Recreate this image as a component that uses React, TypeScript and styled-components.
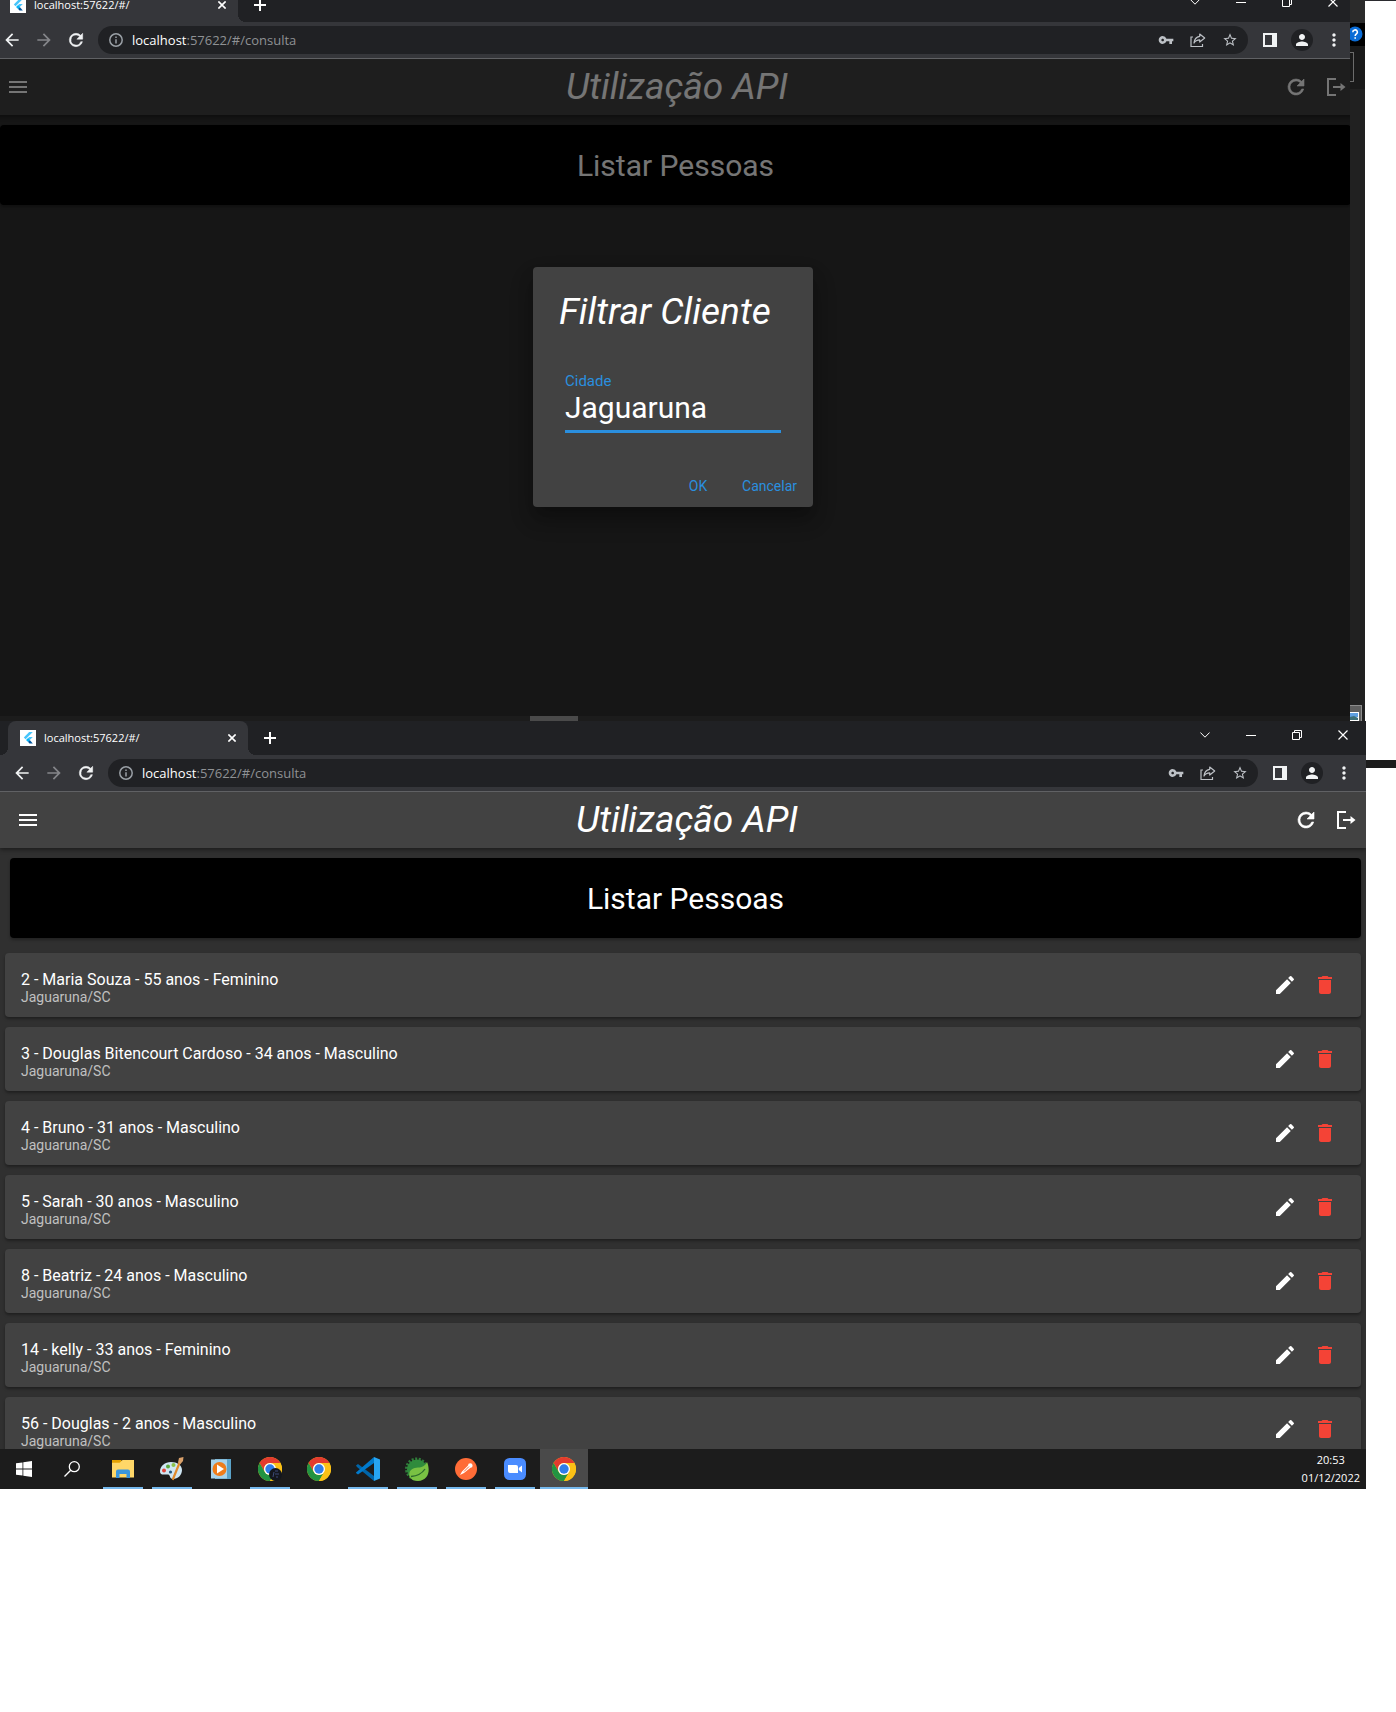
import React from "react";
import styled, { createGlobalStyle, css } from "styled-components";
import {
  MdArrowBack,
  MdArrowForward,
  MdDelete,
  MdEdit,
  MdMenu,
  MdMoreVert,
  MdPerson,
  MdStarBorder,
  MdVpnKey,
} from "react-icons/md";

const uiFont = `"Open Sans", "Noto Sans", sans-serif`;
const appFont = `Roboto, "Liberation Sans", sans-serif`;

const color = {
  strip: "#202124",
  toolbar: "#35363a",
  surface: "#424242",
  body: "#303030",
  blue: "#2a8fdf",
  red: "#f44336",
  taskbar: "#1c1c1c",
};

const GlobalStyle = createGlobalStyle`
  *, *::before, *::after { box-sizing: border-box; }
  body { margin: 0; background: #ffffff; font-family: ${appFont}; }
  button { border: 0; padding: 0; background: none; color: inherit; font: inherit; cursor: pointer; }
  h1, h2, p, ul { margin: 0; padding: 0; }
  ul { list-style: none; }
  svg { display: block; flex: none; }
`;

/* ---------- page rows ---------- */

const Row = styled.section`
  display: flex;
`;

const Clip = styled.div`
  flex: 1;
  min-width: 0;
  height: 721px;
  overflow: hidden;
`;

const Shifted = styled.div`
  margin: -12px -6px 0 -10px;
`;

const Full = styled.div`
  flex: 1;
  min-width: 0;
`;

const Sliver = styled.div`
  width: 15px;
  height: 721px;
  display: flex;
  flex-direction: column;
  overflow: hidden;
  background: #212121;
`;

const SliverTop = styled.div`
  height: 23px;
  background: #2b2b2b;
`;

const SliverHelp = styled.div`
  height: 23px;
  padding-top: 3px;
  background: #000000;
`;

const SliverPanel = styled.div`
  height: 43px;
  padding-top: 6px;
  background: #1a1a1a;
`;

const SliverBox = styled.div`
  width: 4px;
  height: 30px;
  border: 1px solid #6b6b6b;
  border-left: 0;
`;

const SliverThumb = styled.div`
  margin-top: auto;
  width: 12px;
  height: 16px;
  padding-top: 6px;
  background: #5f5f5f;
  border: solid #8c8c8c;
  border-width: 1px 1px 0 0;
`;

const TopMargin = styled.div`
  width: 31px;
  border-top: 1px solid #2b2b2f;
`;

const SideMargin = styled.div`
  width: 30px;
  padding-top: 39px;
`;

const DarkBar = styled.div`
  height: 8px;
  background: #1c1c1c;
`;

/* ---------- browser chrome ---------- */

const TabStrip = styled.header`
  display: flex;
  height: 34px;
  padding-left: 8px;
  background: ${color.strip};
  color: #ffffff;
`;

const Tab = styled.div`
  position: relative;
  display: flex;
  align-items: center;
  gap: 8px;
  width: 240px;
  padding: 0 8px 0 12px;
  border-radius: 8px 8px 0 0;
  background: ${color.toolbar};
  font: 11px/16px ${uiFont};

  &::before,
  &::after {
    content: "";
    position: absolute;
    bottom: 0;
    width: 8px;
    height: 8px;
  }
  &::before {
    right: 100%;
    background: radial-gradient(circle at 0 0, transparent 8px, ${color.toolbar} 8px);
  }
  &::after {
    left: 100%;
    background: radial-gradient(circle at 100% 0, transparent 8px, ${color.toolbar} 8px);
  }
`;

const TabTitle = styled.span`
  flex: 1;
`;

const SmallButton = styled.button`
  display: grid;
  place-items: center;
  width: 16px;
  height: 16px;
`;

const NewTab = styled.button`
  display: grid;
  place-items: center;
  width: 28px;
  height: 34px;
  margin-left: 8px;
`;

const WindowButtons = styled.div`
  display: flex;
  height: 28px;
  margin-left: auto;
`;

const WindowButton = styled.button`
  display: grid;
  place-items: center;
  width: 46px;
`;

const Toolbar = styled.nav`
  display: flex;
  align-items: center;
  gap: 4px;
  height: 37px;
  padding: 0 8px;
  background: ${color.toolbar};
  border-bottom: 1px solid #606164;
`;

const ToolButton = styled.button<{ $tone?: string }>`
  display: grid;
  place-items: center;
  width: 28px;
  height: 28px;
  color: ${(p) => p.$tone ?? "#f1f3f4"};
`;

const Omnibox = styled.div`
  flex: 1;
  display: flex;
  align-items: center;
  gap: 4px;
  height: 28px;
  margin: 0 4px;
  padding: 0 4px 0 11px;
  border-radius: 14px;
  background: ${color.strip};
`;

const Address = styled.span`
  flex: 1;
  margin-left: 5px;
  color: #8f9194;
  font: 13px/20px ${uiFont};

  b {
    color: #ffffff;
    font-weight: 400;
  }
`;

const Avatar = styled.span`
  display: grid;
  place-items: center;
  width: 22px;
  height: 22px;
  border-radius: 50%;
  background: ${color.strip};
`;

/* ---------- application ---------- */

const AppArea = styled.main`
  position: relative;
  height: 657px;
  overflow: hidden;
  background: ${color.body};
  color: #ffffff;
`;

const AppBar = styled.div`
  display: grid;
  grid-template-columns: 1fr auto 1fr;
  align-items: center;
  height: 56px;
  padding: 0 0 0 8px;
  background: ${color.surface};
  box-shadow: 0 2px 4px rgba(0, 0, 0, 0.4);
`;

const AppTitle = styled.h1`
  font: italic 400 37px/42px ${appFont};
`;

const Actions = styled.div`
  display: flex;
  justify-content: flex-end;
`;

const IconButton = styled.button<{ $tone?: string }>`
  display: grid;
  place-items: center;
  width: 40px;
  height: 40px;
  color: ${(p) => p.$tone ?? "#ffffff"};
`;

const ListButton = styled.button`
  display: block;
  width: calc(100% - 15px);
  height: 80px;
  margin: 10px 5px 15px 10px;
  padding-top: 2px;
  border-radius: 4px;
  background: #000000;
  box-shadow: 0 2px 3px rgba(0, 0, 0, 0.3);
  font: 400 30px/36px ${appFont};
`;

const People = styled.ul`
  display: flex;
  flex-direction: column;
  gap: 10px;
  padding: 0 5px;
`;

const Card = styled.li`
  display: flex;
  align-items: center;
  height: 64px;
  padding: 0 16px;
  border-radius: 4px;
  background: ${color.surface};
  box-shadow: 0 2px 3px rgba(0, 0, 0, 0.35);
`;

const CardText = styled.div`
  flex: 1;
  padding-top: 5px;
`;

const PersonName = styled.p`
  font: 400 16px/19px ${appFont};
`;

const PersonCity = styled.p`
  color: #c0c0c0;
  font: 400 14px/16px ${appFont};
`;

const Backdrop = styled.div`
  position: absolute;
  inset: 0;
  display: grid;
  place-items: center;
  padding-bottom: 1px;
  background: rgba(0, 0, 0, 0.54);
`;

const Dialog = styled.form`
  width: 280px;
  border-radius: 4px;
  background: ${color.surface};
  box-shadow: 0 11px 15px rgba(0, 0, 0, 0.2), 0 12px 24px rgba(0, 0, 0, 0.2);
`;

const DialogTitle = styled.h2`
  padding: 24px 26px 0;
  font: italic 400 37px/42px ${appFont};
`;

const Field = styled.div`
  display: flex;
  flex-direction: column;
  padding: 39px 32px 0;

  label {
    color: ${color.blue};
    font: 400 15px/18px ${appFont};
  }
  input {
    width: 100%;
    height: 43px;
    padding: 0 0 6px;
    border: 0;
    border-bottom: 3px solid ${color.blue};
    outline: 0;
    background: none;
    color: #ffffff;
    font: 400 30px/34px ${appFont};
  }
`;

const DialogActions = styled.div`
  display: flex;
  justify-content: flex-end;
  gap: 4px;
  padding: 35px 8px 3px;
`;

const TextButton = styled.button`
  && {
    min-width: 64px;
    height: 36px;
    padding: 0 8px;
    color: ${color.blue};
    font: 400 14px/16px ${appFont};
  }
`;

/* ---------- taskbar ---------- */

const Taskbar = styled.footer`
  display: flex;
  align-items: stretch;
  height: 40px;
  background: ${color.taskbar};
  color: #ffffff;
`;

const SystemButton = styled.button`
  display: grid;
  place-items: center;
  width: 48px;
`;

const Tasks = styled.div`
  display: flex;
  gap: 1px;
  padding-left: 3px;
`;

const Task = styled.button<{ $running?: boolean; $active?: boolean }>`
  display: grid;
  place-items: center;
  width: 48px;
  ${(p) =>
    p.$running &&
    css`
      background: linear-gradient(#76b9ed, #76b9ed) bottom / 40px 2px no-repeat;
    `}
  ${(p) =>
    p.$active &&
    css`
      background: linear-gradient(#76b9ed, #76b9ed) bottom / 48px 2px no-repeat, #4a4a4a;
    `}
`;

const Clock = styled.time`
  margin-left: auto;
  padding: 2px 6px 2px 0;
  text-align: center;
  font: 11px/18px ${uiFont};
`;

const TaskbarEdge = styled.div`
  height: 5px;
  padding-left: 540px;
  background: ${color.taskbar};

  &::before {
    content: "";
    display: block;
    width: 48px;
    height: 5px;
    background: #4a4a4a;
  }
`;

/* ---------- drawings ---------- */

const FlutterIcon = () => (
  <svg width="16" height="16" viewBox="0 0 16 16">
    <path fill="#fff" d="M0 0h16v16H0z" />
    <path fill="#47c5fb" d="M9.2 2h3.6L5.6 9.200 3.800 7.400z" />
    <path fill="#47c5fb" d="M9.200 7h3.600l-3 3-1.800 1.800-1.800-1.800z" />
    <path fill="#00569e" d="m8 11.800 1.800-1.800 3 3.500H9.500z" />
    <path fill="#00b5f8" d="m6.200 10 1.800-1.800L9.800 10 8 11.800z" />
  </svg>
);

const ReloadIcon = ({ size }: { size: number }) => (
  <svg width={size} height={size} viewBox="0 0 24 24" fill="currentColor" stroke="currentColor" strokeWidth="0.6">
    <path d="M17.650 6.350A7.960 7.960 0 0 0 12 4a8 8 0 1 0 7.730 10h-2.080A6 6 0 1 1 12 6c1.660 0 3.140.69 4.220 1.780L13 11h7V4z" />
  </svg>
);

const Cross = ({ size }: { size: number }) => (
  <svg width={size} height={size} viewBox="0 0 10 10" stroke="currentColor" strokeWidth={size > 9 ? 1.2 : 2}>
    <path d="M.5.5l9 9M9.500.5l-9 9" />
  </svg>
);

const PlusIcon = () => (
  <svg width="12" height="12" viewBox="0 0 12 12" stroke="currentColor" strokeWidth="2">
    <path d="M6 0v12M0 6h12" />
  </svg>
);

const ChevronIcon = () => (
  <svg width="10" height="6" viewBox="0 0 10 6" fill="none" stroke="currentColor">
    <path d="M.4.5 5 5.200 9.600.5" />
  </svg>
);

const MinimizeIcon = () => (
  <svg width="10" height="1" viewBox="0 0 10 1">
    <path fill="currentColor" d="M0 0h10v1H0z" />
  </svg>
);

const RestoreIcon = () => (
  <svg width="10" height="10" viewBox="0 0 10 10" fill="none" stroke="currentColor">
    <path d="M.5 2.500h7v7h-7zM2.500 2.500v-2h7v7h-2" />
  </svg>
);

const InfoIcon = () => (
  <svg width="14" height="14" viewBox="0 0 14 14" fill="none" stroke="#9aa0a6" strokeWidth="1.500">
    <circle cx="7" cy="7" r="6.200" />
    <path d="M7 6.200v4.300M7 3.500v1.500" />
  </svg>
);

const ShareIcon = () => (
  <svg width="16" height="16" viewBox="0 0 16 16" fill="none" stroke="currentColor" strokeWidth="1.200">
    <path d="M3 5H1v9.500h11.500V12" />
    <path strokeLinejoin="round" d="M9.700 2l5 4-5 4V7.800C7 7.800 5.200 8.800 4 11c.3-3.500 2.300-6.200 5.700-6.700z" />
  </svg>
);

const SidePanelIcon = () => (
  <svg width="14" height="14" viewBox="0 0 14 14">
    <path fill="currentColor" fillRule="evenodd" d="M0 0h14v14H0zM2 2v10h7V2z" />
  </svg>
);

const ExitIcon = () => (
  <svg width="20" height="20" viewBox="0 0 20 20" fill="none" stroke="currentColor" strokeWidth="2">
    <path d="M10 2H2v16h8M7 10h9" />
    <path fill="currentColor" stroke="none" d="M14.500 6 19.500 10l-5 4z" />
  </svg>
);

const HelpIcon = () => (
  <svg width="13" height="16" viewBox="0 0 13 16">
    <circle cx="5" cy="8" r="7.500" fill="#0a6cd6" />
    <path d="M2.800 6.200a2.300 2.200 0 1 1 3.500 1.800C5.500 8.500 5.200 8.800 5.200 10M5.200 11.200v1.600" fill="none" stroke="#fff" strokeWidth="1.600" />
  </svg>
);

const PictureIcon = () => (
  <svg width="9" height="10" viewBox="0 0 9 10">
    <path fill="#fff" d="M0 0h9v10H0z" />
    <path fill="#5f9fe0" d="M0 1h8v4H0z" />
    <path fill="#3d6f76" d="M0 5l4-1 4 2v2H0z" />
  </svg>
);

const WindowsIcon = () => (
  <svg width="16" height="16" viewBox="0 0 16 16">
    <path fill="#fff" d="M0 2.300 6.500 1.400v6.200H0zM7.300 1.300 16 0v7.600H7.300zM0 8.400h6.500v6.200L0 13.700zM7.300 8.400H16V16l-8.700-1.200z" />
  </svg>
);

const SearchIcon = () => (
  <svg width="16" height="16" viewBox="0 0 16 16" fill="none" stroke="#fff" strokeWidth="1.300">
    <circle cx="10.300" cy="5.700" r="5" />
    <path d="M6.700 9.300.5 15.500" />
  </svg>
);

const ExplorerIcon = () => (
  <svg width="22" height="20" viewBox="0 0 22 20">
    <path fill="#e5a100" d="M0 1h9l2 2h11v3H0z" />
    <path fill="#ffd768" d="M0 3.500h8L10.500 1H22v17.500H0z" />
    <path fill="#e5a100" d="M0 1h9l-1.500 2.500H0z" />
    <path fill="#3a96dd" d="M4 19v-6.500a2 2 0 0 1 2-2h10a2 2 0 0 1 2 2V19h-3.500v-4h-7v4z" />
  </svg>
);

const PaintIcon = () => (
  <svg width="24" height="24" viewBox="0 0 24 24">
    <path fill="#cfe6f3" d="M11 5c6 0 11 3 11 8s-4 9-9 9c-4 0-2-4-5-4.500S0 19 0 14.500C0 9 5 5 11 5z" />
    <circle cx="4" cy="13.500" r="2" fill="#e0463c" />
    <circle cx="8" cy="9.500" r="2" fill="#5aa83c" />
    <circle cx="13.500" cy="8" r="2" fill="#8ac24a" />
    <circle cx="10.500" cy="15" r="1.600" fill="#24547c" />
    <path stroke="#e08a2c" strokeWidth="2.200" strokeLinecap="round" d="M19.500 6 13 22" />
    <path fill="#d9a06a" d="M18 5.500 19 1l4.500-1-.5 4-2.500 3z" />
  </svg>
);

const PlayerIcon = () => (
  <svg width="20" height="20" viewBox="0 0 20 20">
    <path fill="#5ba3c9" d="M4 0h16v20H4z" />
    <path fill="#a8d3ea" d="M0 .5h16v19H0z" />
    <circle cx="8.500" cy="10" r="7" fill="#ef7d1a" />
    <path fill="#fff" d="M6 5.500 13 10l-7 4.500z" />
  </svg>
);

const ChromeIcon = ({ badge }: { badge?: boolean }) => (
  <svg width="24" height="24" viewBox="0 0 24 24">
    <circle cx="12" cy="12" r="12" fill="#fbc116" />
    <path fill="#e33b2e" d="M1.600 6A12 12 0 0 1 22.400 6H12a6 6 0 0 0-5.200 9z" />
    <path fill="#229342" d="M1.600 6 6.800 15a6 6 0 0 0 10.400 0L12 24A12 12 0 0 1 1.600 6z" />
    <path fill="#fbc116" d="M12 6h10.400A12 12 0 0 1 12 24l5.200-9A6 6 0 0 0 12 6z" />
    <circle cx="12" cy="12" r="6" fill="#fff" />
    <circle cx="12" cy="12" r="4.700" fill="#2f7de9" />
    {badge && <circle cx="17.500" cy="17.500" r="6.500" fill="#14171d" />}
    {badge && <path d="M15 20l1-5M17 14h3M17 17h4M18 20h2" stroke="#3c4b78" fill="none" />}
  </svg>
);

const CodeIcon = () => (
  <svg width="24" height="24" viewBox="0 0 24 24">
    <path fill="#0065a9" d="M0 8.500 2 7l16 12v5L1 10z" />
    <path fill="#007acc" d="M0 15.500 18 0v6L2 17.500 0 16z" />
    <path fill="#27a5f2" d="M18 0l6 2.500v19L18 24z" />
  </svg>
);

const LeafIcon = () => (
  <svg width="24" height="24" viewBox="0 0 24 24">
    <circle cx="11.500" cy="12" r="10" fill="none" stroke="#2f7d3a" strokeWidth="3" strokeDasharray="2 1.500" />
    <circle cx="12" cy="12.500" r="10" fill="#2f8b3c" />
    <path fill="#79c143" d="M22 5c3.500 8 2 18-9 19-4 0-7-1.500-8.500-4.500C3 13 8 11 13 10.500c4 0 7-1.500 9-5.500z" />
    <path fill="none" stroke="#2b6b2c" strokeWidth="1.300" d="M6 19.500c6-.5 11-3 14-7.500" />
  </svg>
);

const PostmanIcon = () => (
  <svg width="22" height="22" viewBox="0 0 22 22">
    <circle cx="11" cy="11" r="11" fill="#ff6c37" />
    <path fill="#fff" d="M5 17l2-3.500 6-6a2.300 2.300 0 1 1 2.500 2.300L9 15z" />
    <path stroke="#ff6c37" d="M9 13.500l5-5" />
  </svg>
);

const ZoomIcon = () => (
  <svg width="22" height="22" viewBox="0 0 22 22">
    <rect width="22" height="22" rx="5.500" fill="#4a8cff" />
    <path fill="#fff" d="M4 7h8a2 2 0 0 1 2 2v6H6a2 2 0 0 1-2-2zM14.800 10 18 7.500v7L14.800 12z" />
  </svg>
);

/* ---------- composition ---------- */

const BrowserChrome = () => (
  <>
    <TabStrip>
      <Tab>
        <FlutterIcon />
        <TabTitle>localhost:57622/#/</TabTitle>
        <SmallButton aria-label="Fechar guia">
          <Cross size={8} />
        </SmallButton>
      </Tab>
      <NewTab aria-label="Nova guia">
        <PlusIcon />
      </NewTab>
      <WindowButtons>
        <WindowButton aria-label="Pesquisar guias"><ChevronIcon /></WindowButton>
        <WindowButton aria-label="Minimizar"><MinimizeIcon /></WindowButton>
        <WindowButton aria-label="Restaurar"><RestoreIcon /></WindowButton>
        <WindowButton aria-label="Fechar"><Cross size={10} /></WindowButton>
      </WindowButtons>
    </TabStrip>
    <Toolbar>
      <ToolButton aria-label="Voltar"><MdArrowBack size={20} /></ToolButton>
      <ToolButton aria-label="Avançar" $tone="#85868a"><MdArrowForward size={20} /></ToolButton>
      <ToolButton aria-label="Recarregar"><ReloadIcon size={20} /></ToolButton>
      <Omnibox>
        <InfoIcon />
        <Address><b>localhost</b>:57622/#/consulta</Address>
        <ToolButton aria-label="Senhas" $tone="#bdc1c6"><MdVpnKey size={16} /></ToolButton>
        <ToolButton aria-label="Compartilhar" $tone="#bdc1c6"><ShareIcon /></ToolButton>
        <ToolButton aria-label="Favoritos" $tone="#bdc1c6"><MdStarBorder size={16} /></ToolButton>
      </Omnibox>
      <ToolButton aria-label="Painel lateral"><SidePanelIcon /></ToolButton>
      <ToolButton aria-label="Perfil"><Avatar><MdPerson size={18} /></Avatar></ToolButton>
      <ToolButton aria-label="Mais"><MdMoreVert size={20} /></ToolButton>
    </Toolbar>
  </>
);

const Application = ({ children }: { children?: React.ReactNode }) => (
  <AppArea>
    <AppBar>
      <IconButton aria-label="Menu"><MdMenu size={24} /></IconButton>
      <AppTitle>Utilização API</AppTitle>
      <Actions>
        <IconButton aria-label="Atualizar"><ReloadIcon size={24} /></IconButton>
        <IconButton aria-label="Sair"><ExitIcon /></IconButton>
      </Actions>
    </AppBar>
    <ListButton>Listar Pessoas</ListButton>
    {children}
  </AppArea>
);

const people = [
  "2 - Maria Souza - 55 anos - Feminino",
  "3 - Douglas Bitencourt Cardoso - 34 anos - Masculino",
  "4 - Bruno - 31 anos - Masculino",
  "5 - Sarah - 30 anos - Masculino",
  "8 - Beatriz - 24 anos - Masculino",
  "14 - kelly - 33 anos - Feminino",
  "56 - Douglas - 2 anos - Masculino",
];

const tasks: { name: string; icon: React.ReactNode; running?: boolean; active?: boolean }[] = [
  { name: "Explorador de Arquivos", icon: <ExplorerIcon />, running: true },
  { name: "Paint", icon: <PaintIcon />, running: true },
  { name: "Media Player", icon: <PlayerIcon /> },
  { name: "Chrome, perfil", icon: <ChromeIcon badge />, running: true },
  { name: "Chrome", icon: <ChromeIcon /> },
  { name: "Visual Studio Code", icon: <CodeIcon />, running: true },
  { name: "Spring Tools", icon: <LeafIcon />, running: true },
  { name: "Postman", icon: <PostmanIcon />, running: true },
  { name: "Zoom", icon: <ZoomIcon />, running: true },
  { name: "Chrome, janela atual", icon: <ChromeIcon />, active: true },
];

export default function App() {
  return (
    <>
      <GlobalStyle />
      <Row>
        <Clip>
          <Shifted>
            <BrowserChrome />
            <Application>
              <Backdrop>
                <Dialog onSubmit={(e) => e.preventDefault()}>
                  <DialogTitle>Filtrar Cliente</DialogTitle>
                  <Field>
                    <label htmlFor="cidade">Cidade</label>
                    <input id="cidade" type="text" defaultValue="Jaguaruna" />
                  </Field>
                  <DialogActions>
                    <TextButton type="submit">OK</TextButton>
                    <TextButton type="button">Cancelar</TextButton>
                  </DialogActions>
                </Dialog>
              </Backdrop>
            </Application>
            <TaskbarEdge />
          </Shifted>
        </Clip>
        <Sliver>
          <SliverTop />
          <SliverHelp><HelpIcon /></SliverHelp>
          <SliverPanel><SliverBox /></SliverPanel>
          <SliverThumb><PictureIcon /></SliverThumb>
        </Sliver>
        <TopMargin />
      </Row>
      <Row>
        <Full>
          <BrowserChrome />
          <Application>
            <People>
              {people.map((person) => (
                <Card key={person}>
                  <CardText>
                    <PersonName>{person}</PersonName>
                    <PersonCity>Jaguaruna/SC</PersonCity>
                  </CardText>
                  <IconButton aria-label="Editar"><MdEdit size={24} /></IconButton>
                  <IconButton aria-label="Excluir" $tone={color.red}><MdDelete size={24} /></IconButton>
                </Card>
              ))}
            </People>
          </Application>
          <Taskbar>
            <SystemButton aria-label="Iniciar"><WindowsIcon /></SystemButton>
            <SystemButton aria-label="Pesquisar"><SearchIcon /></SystemButton>
            <Tasks>
              {tasks.map((task) => (
                <Task key={task.name} aria-label={task.name} $running={task.running} $active={task.active}>
                  {task.icon}
                </Task>
              ))}
            </Tasks>
            <Clock>
              20:53
              <br />
              01/12/2022
            </Clock>
          </Taskbar>
        </Full>
        <SideMargin>
          <DarkBar />
        </SideMargin>
      </Row>
    </>
  );
}
